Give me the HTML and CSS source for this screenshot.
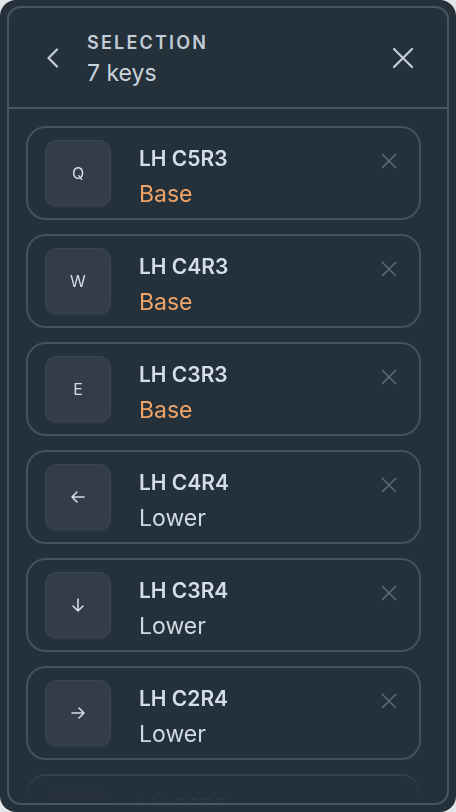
FILE: index.html
```html
<!DOCTYPE html>
<html lang="en">
<head>
    <meta charset="UTF-8">
    <meta name="viewport" content="width=device-width, initial-scale=1.0">
    <title>Selection</title>
    <link rel="stylesheet" href="styles.css">
</head>
<body>
    <div class="app">
        <div class="panel">
            <div class="header">
                <button class="icon-btn back">
                    <svg width="14" height="20" viewBox="0 0 14 20"><path d="M12 1.5 L3.5 10 L12 18.5" fill="none" stroke="currentColor" stroke-width="2.2" stroke-linecap="round" stroke-linejoin="round"/></svg>
                </button>
                <div class="heading">
                    <div class="eyebrow">SELECTION</div>
                    <div class="count">7 keys</div>
                </div>
                <button class="icon-btn close">
                    <svg width="24" height="24" viewBox="0 0 24 24"><path d="M3 3 L21 21 M21 3 L3 21" fill="none" stroke="currentColor" stroke-width="2.2" stroke-linecap="round"/></svg>
                </button>
            </div>

            <div class="list">
                <div class="card">
                    <div class="keycap">Q</div>
                    <div class="info">
                        <div class="pos">LH C5R3</div>
                        <div class="layer base">Base</div>
                    </div>
                    <button class="remove"><svg width="16" height="16" viewBox="0 0 16 16"><path d="M1 1 L15 15 M15 1 L1 15" stroke="currentColor" stroke-width="1.6"/></svg></button>
                </div>
                <div class="card">
                    <div class="keycap">W</div>
                    <div class="info">
                        <div class="pos">LH C4R3</div>
                        <div class="layer base">Base</div>
                    </div>
                    <button class="remove"><svg width="16" height="16" viewBox="0 0 16 16"><path d="M1 1 L15 15 M15 1 L1 15" stroke="currentColor" stroke-width="1.6"/></svg></button>
                </div>
                <div class="card">
                    <div class="keycap">E</div>
                    <div class="info">
                        <div class="pos">LH C3R3</div>
                        <div class="layer base">Base</div>
                    </div>
                    <button class="remove"><svg width="16" height="16" viewBox="0 0 16 16"><path d="M1 1 L15 15 M15 1 L1 15" stroke="currentColor" stroke-width="1.6"/></svg></button>
                </div>
                <div class="card">
                    <div class="keycap">
                        <svg width="18" height="18" viewBox="0 0 18 18"><path d="M15 9 H3 M8 4 L3 9 L8 14" fill="none" stroke="currentColor" stroke-width="1.6" stroke-linecap="round" stroke-linejoin="round"/></svg>
                    </div>
                    <div class="info">
                        <div class="pos">LH C4R4</div>
                        <div class="layer">Lower</div>
                    </div>
                    <button class="remove"><svg width="16" height="16" viewBox="0 0 16 16"><path d="M1 1 L15 15 M15 1 L1 15" stroke="currentColor" stroke-width="1.6"/></svg></button>
                </div>
                <div class="card">
                    <div class="keycap">
                        <svg width="18" height="18" viewBox="0 0 18 18"><path d="M9 3 V15 M4 10 L9 15 L14 10" fill="none" stroke="currentColor" stroke-width="1.6" stroke-linecap="round" stroke-linejoin="round"/></svg>
                    </div>
                    <div class="info">
                        <div class="pos">LH C3R4</div>
                        <div class="layer">Lower</div>
                    </div>
                    <button class="remove"><svg width="16" height="16" viewBox="0 0 16 16"><path d="M1 1 L15 15 M15 1 L1 15" stroke="currentColor" stroke-width="1.6"/></svg></button>
                </div>
                <div class="card">
                    <div class="keycap">
                        <svg width="18" height="18" viewBox="0 0 18 18"><path d="M3 9 H15 M10 4 L15 9 L10 14" fill="none" stroke="currentColor" stroke-width="1.6" stroke-linecap="round" stroke-linejoin="round"/></svg>
                    </div>
                    <div class="info">
                        <div class="pos">LH C2R4</div>
                        <div class="layer">Lower</div>
                    </div>
                    <button class="remove"><svg width="16" height="16" viewBox="0 0 16 16"><path d="M1 1 L15 15 M15 1 L1 15" stroke="currentColor" stroke-width="1.6"/></svg></button>
                </div>
                <div class="card">
                    <div class="keycap">
                        <svg width="18" height="18" viewBox="0 0 18 18"><path d="M9 15 V3 M4 8 L9 3 L14 8" fill="none" stroke="currentColor" stroke-width="1.6" stroke-linecap="round" stroke-linejoin="round"/></svg>
                    </div>
                    <div class="info">
                        <div class="pos">LH C2R5</div>
                        <div class="layer">Lower</div>
                    </div>
                    <button class="remove"><svg width="16" height="16" viewBox="0 0 16 16"><path d="M1 1 L15 15 M15 1 L1 15" stroke="currentColor" stroke-width="1.6"/></svg></button>
                </div>
            </div>
        </div>
    </div>
</body>
</html>
```

FILE: styles.css
```css
* {
    box-sizing: border-box;
}

body {
    margin: 0;
    background-color: #e4e7ea;
    font-family: Inter, "Noto Sans", sans-serif;
}

.app {
    width: 456px;
    height: 812px;
    padding: 6px 7px 7px 7px;
    background-color: #24303a;
    border-radius: 16px;
}

.panel {
    height: 100%;
    display: flex;
    flex-direction: column;
    border: 2px solid #4a5763;
    border-radius: 14px;
    overflow: hidden;
}

.header {
    height: 101px;
    flex-shrink: 0;
    display: flex;
    align-items: center;
    padding: 0 32px 0 36px;
    border-bottom: 2px solid #4a5763;
}

.icon-btn {
    display: flex;
    align-items: center;
    justify-content: center;
    padding: 0;
    border: none;
    background: none;
    color: #c3cdd7;
    cursor: pointer;
}

.heading {
    flex: 1;
    margin-left: 28px;
    margin-top: 2px;
}

.eyebrow {
    font-size: 18px;
    font-weight: 600;
    letter-spacing: 2.2px;
    color: #c3cdd7;
    line-height: 28px;
}

.count {
    font-size: 23px;
    color: #c9d3dc;
    line-height: 32px;
}

.list {
    flex: 1;
    display: flex;
    flex-direction: column;
    gap: 14px;
    padding: 17px 26px 0 17px;
    overflow: hidden;
    -webkit-mask-image: linear-gradient(to bottom, #000 calc(100% - 46px), rgba(0, 0, 0, 0.25) calc(100% - 20px), transparent 100%);
    mask-image: linear-gradient(to bottom, #000 calc(100% - 46px), rgba(0, 0, 0, 0.25) calc(100% - 20px), transparent 100%);
}

.card {
    height: 94px;
    flex-shrink: 0;
    display: flex;
    align-items: center;
    padding: 0 22px 0 16px;
    border: 2px solid #45515c;
    border-radius: 20px;
}

.keycap {
    width: 66px;
    height: 66px;
    flex-shrink: 0;
    display: flex;
    align-items: center;
    justify-content: center;
    margin-left: 1px;
    background-color: #323d49;
    border: 1px solid #3b4753;
    border-radius: 11px;
    box-shadow: 0 2px 0 #2c3641;
    font-size: 16px;
    color: #d3dce5;
}

.info {
    flex: 1;
    margin-left: 28px;
    margin-top: 7px;
}

.pos {
    font-size: 21px;
    font-weight: 600;
    color: #d4dee8;
    line-height: 36px;
}

.layer {
    font-size: 23px;
    color: #cfd9e2;
    line-height: 35px;
}

.layer.base {
    color: #f0a468;
}

.remove {
    align-self: flex-start;
    margin-top: 25px;
    padding: 0;
    border: none;
    background: none;
    color: #5e6a75;
    display: flex;
    cursor: pointer;
}
```
